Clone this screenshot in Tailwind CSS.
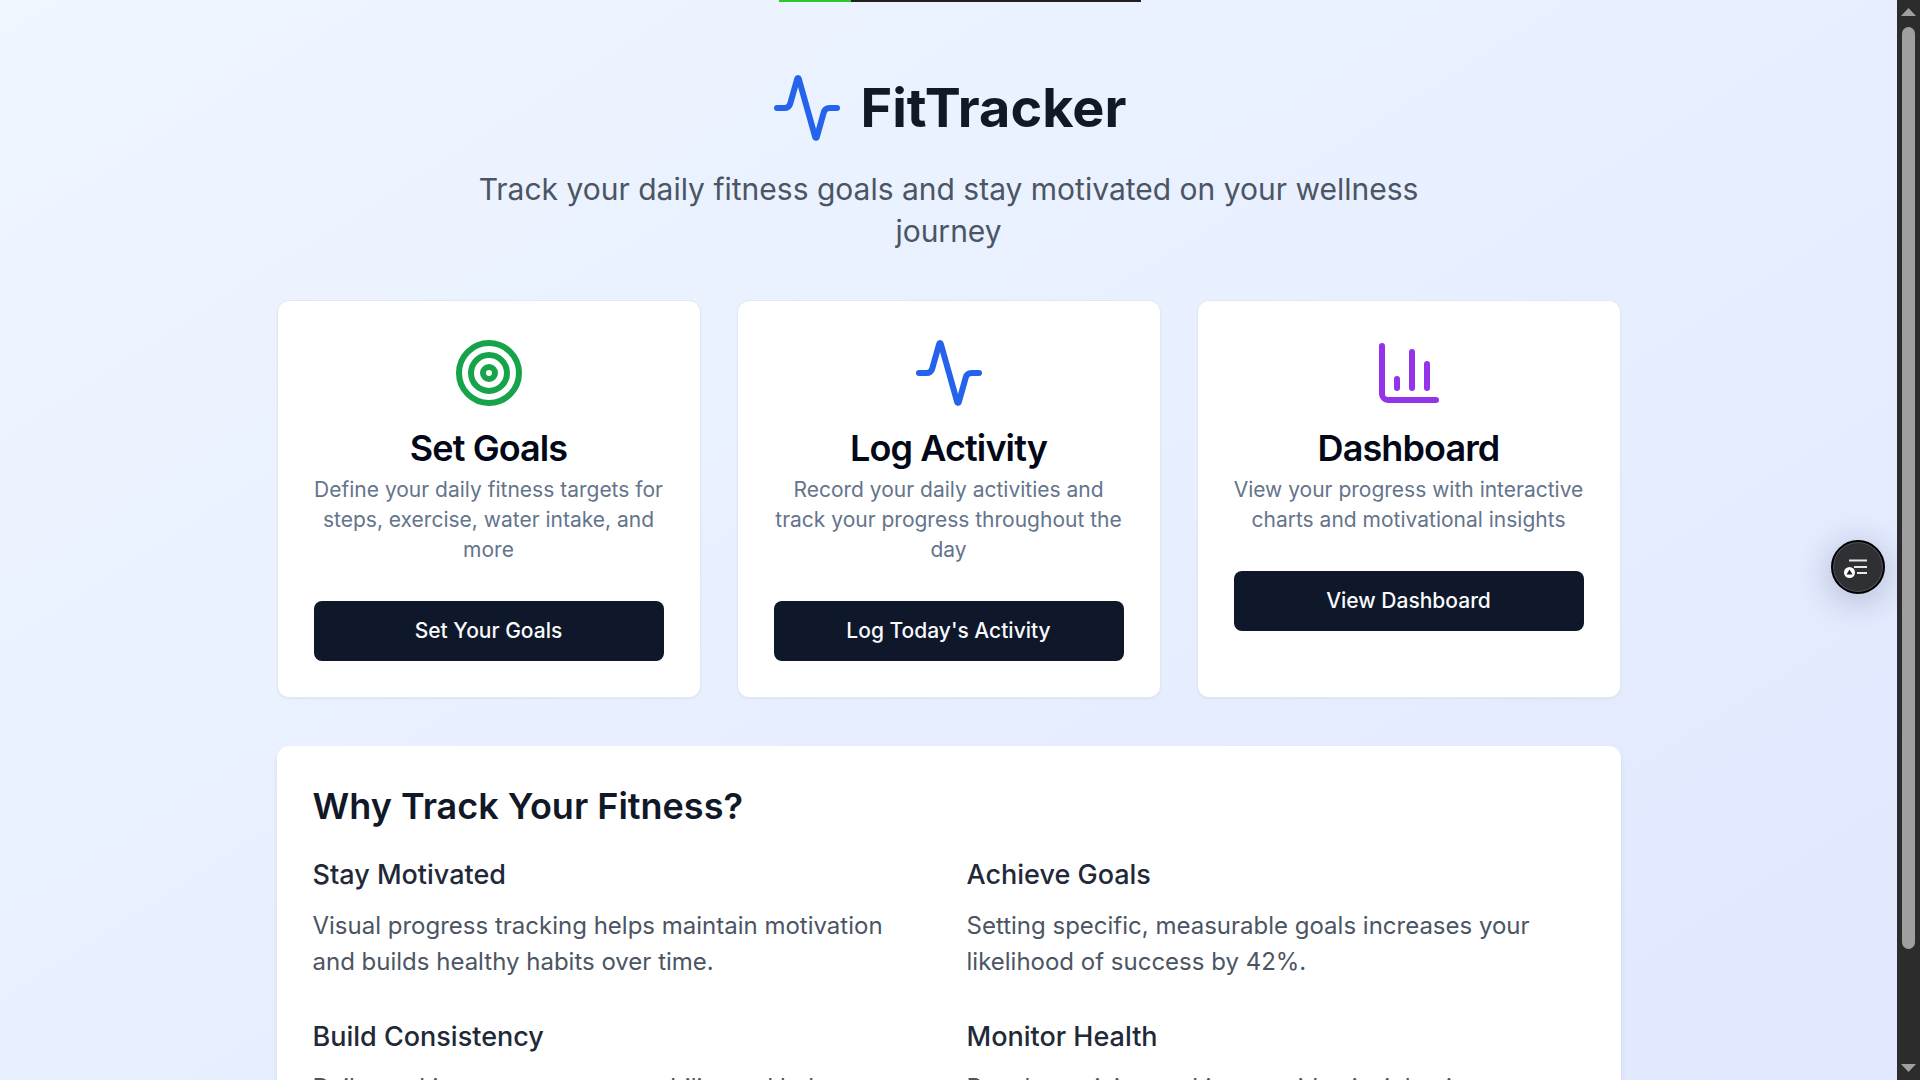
<!DOCTYPE html>
<html lang="en">
<head>
<meta charset="utf-8">
<meta name="viewport" content="width=device-width, initial-scale=1">
<title>FitTracker</title>
<script src="https://cdn.jsdelivr.net/npm/@tailwindcss/browser@4"></script>
</head>
<body class="flex h-screen overflow-hidden font-['Inter',sans-serif]">
  <div class="relative min-w-0 flex-1 overflow-hidden">
    <main class="bg-linear-to-br from-[#eff6ff] to-[#e0e7ff] px-6 pt-[72px] pb-9">
      <div class="mx-auto max-w-[1344px]">
        <header class="mb-12 text-center">
          <div class="mb-6 flex items-center justify-center gap-[18px]">
            <svg class="size-[72px] text-[#2563eb]" viewBox="0 0 24 24" fill="none" stroke="currentColor" stroke-width="2" stroke-linecap="round" stroke-linejoin="round" aria-hidden="true"><path d="M22 12h-2.48a2 2 0 0 0-1.93 1.46l-2.35 8.36a.25.25 0 0 1-.48 0L9.24 2.18a.25.25 0 0 0-.48 0l-2.35 8.36A2 2 0 0 1 4.49 12H2"/></svg>
            <h1 class="text-[54px] leading-[60px] font-bold text-[#111827]">FitTracker</h1>
          </div>
          <p class="mx-auto max-w-[1008px] text-[30px] leading-[42px] text-[#4b5563]">Track your daily fitness goals and stay motivated on your wellness journey</p>
        </header>

        <div class="mb-12 grid grid-cols-3 gap-9">
          <section class="rounded-xl border border-[#e2e8f0] bg-white p-9 shadow-xs">
            <div class="text-center">
              <svg class="mx-auto mb-[21px] size-[72px] text-[#16a34a]" viewBox="0 0 24 24" fill="none" stroke="currentColor" stroke-width="2" aria-hidden="true"><circle cx="12" cy="12" r="10"/><circle cx="12" cy="12" r="6"/><circle cx="12" cy="12" r="2"/></svg>
              <h2 class="mb-[9px] text-[36px] leading-[36px] font-semibold tracking-tight text-[#020817]">Set Goals</h2>
              <p class="text-[21px] leading-[30px] text-[#64748b]">Define your daily fitness targets for steps, exercise, water intake, and more</p>
            </div>
            <button type="button" class="mt-9 h-[60px] w-full rounded-lg bg-[#0f172a] text-[21px] leading-[30px] font-medium text-[#f8fafc]">Set Your Goals</button>
          </section>
          <section class="rounded-xl border border-[#e2e8f0] bg-white p-9 shadow-xs">
            <div class="text-center">
              <svg class="mx-auto mb-[21px] size-[72px] text-[#2563eb]" viewBox="0 0 24 24" fill="none" stroke="currentColor" stroke-width="2" stroke-linecap="round" stroke-linejoin="round" aria-hidden="true"><path d="M22 12h-2.48a2 2 0 0 0-1.93 1.46l-2.35 8.36a.25.25 0 0 1-.48 0L9.24 2.18a.25.25 0 0 0-.48 0l-2.35 8.36A2 2 0 0 1 4.49 12H2"/></svg>
              <h2 class="mb-[9px] text-[36px] leading-[36px] font-semibold tracking-tight text-[#020817]">Log Activity</h2>
              <p class="text-[21px] leading-[30px] text-[#64748b]">Record your daily activities and track your progress throughout the day</p>
            </div>
            <button type="button" class="mt-9 h-[60px] w-full rounded-lg bg-[#0f172a] text-[21px] leading-[30px] font-medium text-[#f8fafc]">Log Today's Activity</button>
          </section>
          <section class="rounded-xl border border-[#e2e8f0] bg-white p-9 shadow-xs">
            <div class="text-center">
              <svg class="mx-auto mb-[21px] size-[72px] text-[#9333ea]" viewBox="0 0 24 24" fill="none" stroke="currentColor" stroke-width="2" stroke-linecap="round" stroke-linejoin="round" aria-hidden="true"><path d="M3 3v16a2 2 0 0 0 2 2h16"/><path d="M18 17V9"/><path d="M13 17V5"/><path d="M8 17v-3"/></svg>
              <h2 class="mb-[9px] text-[36px] leading-[36px] font-semibold tracking-tight text-[#020817]">Dashboard</h2>
              <p class="text-[21px] leading-[30px] text-[#64748b]">View your progress with interactive charts and motivational insights</p>
            </div>
            <button type="button" class="mt-9 h-[60px] w-full rounded-lg bg-[#0f172a] text-[21px] leading-[30px] font-medium text-[#f8fafc]">View Dashboard</button>
          </section>
        </div>

        <section class="rounded-xl bg-white p-9 shadow-md">
          <h2 class="mb-6 text-[36px] leading-[48px] font-semibold text-[#111827]">Why Track Your Fitness?</h2>
          <div class="grid grid-cols-2 gap-9">
            <div>
              <h3 class="mb-3 text-[27px] leading-[42px] font-medium text-[#1f2937]">Stay Motivated</h3>
              <p class="text-[24px] leading-[36px] text-[#4b5563]">Visual progress tracking helps maintain motivation and builds healthy habits over time.</p>
            </div>
            <div>
              <h3 class="mb-3 text-[27px] leading-[42px] font-medium text-[#1f2937]">Achieve Goals</h3>
              <p class="text-[24px] leading-[36px] text-[#4b5563]">Setting specific, measurable goals increases your likelihood of success by 42%.</p>
            </div>
            <div>
              <h3 class="mb-3 text-[27px] leading-[42px] font-medium text-[#1f2937]">Build Consistency</h3>
              <p class="text-[24px] leading-[36px] text-[#4b5563]">Daily tracking creates accountability and helps establish lasting routines.</p>
            </div>
            <div>
              <h3 class="mb-3 text-[27px] leading-[42px] font-medium text-[#1f2937]">Monitor Health</h3>
              <p class="text-[24px] leading-[36px] text-[#4b5563]">Regular activity tracking provides insights into your overall health trends.</p>
            </div>
          </div>
        </section>
      </div>
    </main>

    <button type="button" aria-label="Open reading assistant" class="absolute top-[540px] right-3 size-[54px] rounded-full border-2 border-black bg-[#2f3034] shadow-[0_6px_30px_6px_rgba(30,41,80,0.18)] inset-ring inset-ring-[#55565a]">
      <svg class="size-[50px]" viewBox="0 0 50 50" fill="none" aria-hidden="true"><path d="M16 18.5h18M21 25h13M24 31h10" stroke="#e8e8e8" stroke-width="2"/><circle cx="16.500" cy="30.500" r="5.500" fill="#fff"/><path d="M16.500 27.500l3 5h-6z" fill="#1c1c1e"/></svg>
    </button>
  </div>

  <div class="flex w-[23px] flex-col items-center bg-[#2c2c2c] py-2" aria-hidden="true">
    <svg class="h-2 w-[15px]" viewBox="0 0 15 8"><path d="M7.500 0L15 8H0z" fill="#9f9f9f"/></svg>
    <div class="mt-[11px] mb-[115px] w-[13px] flex-1 rounded-full bg-[#9f9f9f]"></div>
    <svg class="h-2 w-[15px]" viewBox="0 0 15 8"><path d="M0 0h15L7.500 8z" fill="#9f9f9f"/></svg>
  </div>

  <div class="absolute top-0 left-1/2 flex h-[2px] w-[362px] -translate-x-1/2 bg-[#231f20]" aria-hidden="true">
    <div class="w-1/5 bg-[#2bc92b]"></div>
  </div>
</body>
</html>
